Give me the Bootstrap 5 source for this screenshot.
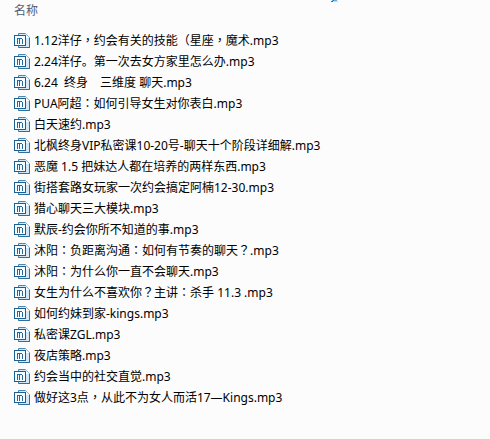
<!DOCTYPE html>
<html lang="zh-CN">
<head>
<meta charset="utf-8">
<meta name="viewport" content="width=device-width, initial-scale=1">
<title>名称</title>
<link href="https://cdn.jsdelivr.net/npm/bootstrap@5.3.0/dist/css/bootstrap.min.css" rel="stylesheet">
<style>
body { background: #fcfcfc; color: #000; font: 12px/21px "Noto Sans", "Noto Sans CJK SC", sans-serif; }
.files { padding-left: 14px; }
.files th { color: #4c607a; height: 30px; line-height: 22px; vertical-align: top; }
.files td { height: 21px; }
.file-row { gap: 4px; height: 21px; white-space: pre; }
.file-icon { width: 16px; height: 16px; flex: none; }
.centered-mark { font-family: "Noto Sans CJK TC", sans-serif; line-height: 1; }
.sort-mark { left: 331px; top: 0; width: 7px; height: 2px; }
</style>
<script src="https://cdn.jsdelivr.net/npm/bootstrap@5.3.0/dist/js/bootstrap.bundle.min.js"></script>
</head>
<body>
<svg class="d-none" aria-hidden="true">
  <symbol id="mp3" viewBox="0 0 16 16">
    <path d="M4.5.5h7l4 4v10h-11z" fill="#d3e7f5" stroke="#4a87b2"/>
    <path d="M11 1v4h4z" fill="#fff"/>
    <path d="M11.5.5l4 4" stroke="#8db8d6"/>
    <path d="M15.5 5v9.500h-11" fill="none" stroke="#2d6f9f"/>
    <path d="M0 2h12v11H0z" fill="#1c6092"/>
    <path d="M1 3h10v9H1z" fill="#f6fbff"/>
    <path d="M3 5h5v1h1v5H8V6H6v5H5V6H4v5H3z" fill="#24689b"/>
  </symbol>
</svg>
<svg class="sort-mark position-absolute" viewBox="0 0 7 2" aria-hidden="true"><path d="M1 0h5v1H1z" fill="#68b3d7"/><path d="M0 1h2V0h1v1H2v1H0z" fill="#526b82"/><path d="M2 1h5v1H2z" fill="#b8e0f1"/></svg>
<main class="files">
<table class="w-100">
<thead><tr><th scope="col" class="fw-normal p-0">名称</th></tr></thead>
<tbody>
<tr><td class="p-0"><div class="file-row d-flex align-items-center"><svg class="file-icon" aria-hidden="true"><use href="#mp3"/></svg><span>1.12洋仔<span class="centered-mark" lang="zh-Hant">，</span>约会有关的技能（星座<span class="centered-mark" lang="zh-Hant">，</span>魔术.mp3</span></div></td></tr>
<tr><td class="p-0"><div class="file-row d-flex align-items-center"><svg class="file-icon" aria-hidden="true"><use href="#mp3"/></svg><span>2.24洋仔。第一次去女方家里怎么办.mp3</span></div></td></tr>
<tr><td class="p-0"><div class="file-row d-flex align-items-center"><svg class="file-icon" aria-hidden="true"><use href="#mp3"/></svg><span>6.24  终身　三维度 聊天.mp3</span></div></td></tr>
<tr><td class="p-0"><div class="file-row d-flex align-items-center"><svg class="file-icon" aria-hidden="true"><use href="#mp3"/></svg><span>PUA阿超<span class="centered-mark" lang="zh-Hant">：</span>如何引导女生对你表白.mp3</span></div></td></tr>
<tr><td class="p-0"><div class="file-row d-flex align-items-center"><svg class="file-icon" aria-hidden="true"><use href="#mp3"/></svg><span>白天速约.mp3</span></div></td></tr>
<tr><td class="p-0"><div class="file-row d-flex align-items-center"><svg class="file-icon" aria-hidden="true"><use href="#mp3"/></svg><span>北枫终身VIP私密课10-20号-聊天十个阶段详细解.mp3</span></div></td></tr>
<tr><td class="p-0"><div class="file-row d-flex align-items-center"><svg class="file-icon" aria-hidden="true"><use href="#mp3"/></svg><span>恶魔 1.5 把妹达人都在培养的两样东西.mp3</span></div></td></tr>
<tr><td class="p-0"><div class="file-row d-flex align-items-center"><svg class="file-icon" aria-hidden="true"><use href="#mp3"/></svg><span>街搭套路女玩家一次约会搞定阿楠12-30.mp3</span></div></td></tr>
<tr><td class="p-0"><div class="file-row d-flex align-items-center"><svg class="file-icon" aria-hidden="true"><use href="#mp3"/></svg><span>猎心聊天三大模块.mp3</span></div></td></tr>
<tr><td class="p-0"><div class="file-row d-flex align-items-center"><svg class="file-icon" aria-hidden="true"><use href="#mp3"/></svg><span>默辰-约会你所不知道的事.mp3</span></div></td></tr>
<tr><td class="p-0"><div class="file-row d-flex align-items-center"><svg class="file-icon" aria-hidden="true"><use href="#mp3"/></svg><span>沐阳<span class="centered-mark" lang="zh-Hant">：</span>负距离沟通<span class="centered-mark" lang="zh-Hant">：</span>如何有节奏的聊天<span class="centered-mark" lang="zh-Hant">？</span>.mp3</span></div></td></tr>
<tr><td class="p-0"><div class="file-row d-flex align-items-center"><svg class="file-icon" aria-hidden="true"><use href="#mp3"/></svg><span>沐阳<span class="centered-mark" lang="zh-Hant">：</span>为什么你一直不会聊天.mp3</span></div></td></tr>
<tr><td class="p-0"><div class="file-row d-flex align-items-center"><svg class="file-icon" aria-hidden="true"><use href="#mp3"/></svg><span>女生为什么不喜欢你<span class="centered-mark" lang="zh-Hant">？</span>主讲<span class="centered-mark" lang="zh-Hant">：</span>杀手 11.3 .mp3</span></div></td></tr>
<tr><td class="p-0"><div class="file-row d-flex align-items-center"><svg class="file-icon" aria-hidden="true"><use href="#mp3"/></svg><span>如何约妹到家-kings.mp3</span></div></td></tr>
<tr><td class="p-0"><div class="file-row d-flex align-items-center"><svg class="file-icon" aria-hidden="true"><use href="#mp3"/></svg><span>私密课ZGL.mp3</span></div></td></tr>
<tr><td class="p-0"><div class="file-row d-flex align-items-center"><svg class="file-icon" aria-hidden="true"><use href="#mp3"/></svg><span>夜店策略.mp3</span></div></td></tr>
<tr><td class="p-0"><div class="file-row d-flex align-items-center"><svg class="file-icon" aria-hidden="true"><use href="#mp3"/></svg><span>约会当中的社交直觉.mp3</span></div></td></tr>
<tr><td class="p-0"><div class="file-row d-flex align-items-center"><svg class="file-icon" aria-hidden="true"><use href="#mp3"/></svg><span>做好这3点<span class="centered-mark" lang="zh-Hant">，</span>从此不为女人而活17—Kings.mp3</span></div></td></tr>
</tbody>
</table>
</main>
</body>
</html>
